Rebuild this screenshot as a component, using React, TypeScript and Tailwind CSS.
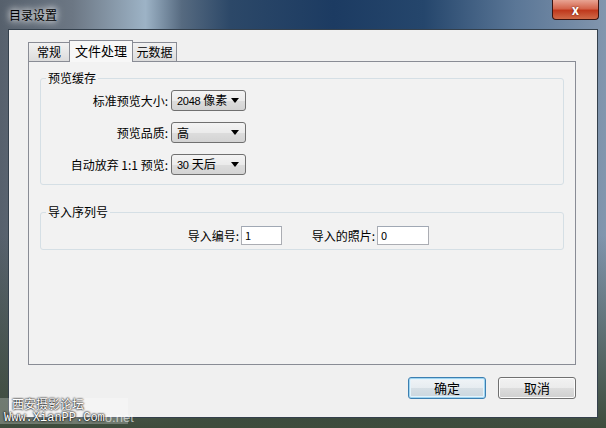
import React from "react";

const font = "font-['Noto_Sans_CJK_SC','Noto_Sans',sans-serif]";

function Arrow() {
  return (
    <svg width="8" height="5" viewBox="0 0 8 5" className="shrink-0">
      <path d="M0 0h8L4 5z" fill="#000" />
    </svg>
  );
}

function Combo({ num, text }: { num?: string; text: string }) {
  return (
    <div className="flex h-[21px] w-[75px] items-center justify-between rounded-[3px] border border-[#707070] bg-[linear-gradient(to_bottom,#f4f4f4_0%,#ebebeb_50%,#dddddd_51%,#d3d3d3_100%)] pl-[5px] pr-[6px] leading-none text-black">
      <span className="flex items-baseline gap-[3px]">
        {num && <span className="font-['Liberation_Sans',sans-serif] text-[11px] tracking-[-0.3px]">{num}</span>}
        <span className="text-[12px]">{text}</span>
      </span>
      <Arrow />
    </div>
  );
}

function Field({ value, width }: { value: string; width: string }) {
  return (
    <div className={`flex h-[19px] items-center border border-[#abadb3] border-t-[#a0a8b4] bg-white pl-[3px] text-[11px] text-black ${width}`}>
      {value}
    </div>
  );
}

const rows = [
  { label: "标准预览大小:", num: "2048", text: "像素" },
  { label: "预览品质:", num: "", text: "高" },
  { label: "自动放弃 1:1 预览:", num: "30", text: "天后" },
];

export default function App() {
  return (
    <div
      className={`relative flex h-[428px] w-[606px] flex-col overflow-hidden ${font} bg-[linear-gradient(to_bottom,transparent_55%,#3e4c3c_100%),linear-gradient(90deg,#56606c_0%,#6c7784_12%,#9db3c6_24%,#566a80_30%,#2c4868_38%,#1c3b62_55%,#25466c_70%,#5a7696_85%,#8296ae_100%)]`}
    >
      {/* title bar */}
      <div className="flex h-[29px] shrink-0 items-center pl-[9px]">
        <span className="text-[12px] text-black [text-shadow:0_0_6px_#fff,0_0_10px_#fff]">目录设置</span>
      </div>
      <div className="absolute right-[7px] top-0 flex h-[20px] w-[47px] items-center justify-center rounded-b-[4px] border border-t-0 border-[#3b1410] bg-[linear-gradient(to_bottom,#e8a493_0%,#d4654c_45%,#c0391d_55%,#d06a48_100%)]">
        <span className="text-[13px] font-bold leading-none text-white [text-shadow:0_0_2px_#5a1208]">x</span>
      </div>

      {/* client area */}
      <div className="mx-[8px] flex h-[389px] flex-col border border-[#34404c] bg-[#f0f0f0] pl-[19px] pt-[10px]">
        {/* tabs */}
        <div className="relative z-10 flex h-[21px] items-end">
          <div className="flex h-[19px] w-[42px] items-center justify-center border border-b-0 border-[#898c95] bg-[linear-gradient(to_bottom,#f2f2f2,#dcdcdc)] text-[12px] text-black">
            常规
          </div>
          <div className="-mx-[1px] mb-[-1px] flex h-[22px] w-[64px] items-center justify-center border border-b-0 border-[#898c95] bg-[#f7f7f7] pb-[1px] text-[13px] text-black">
            文件处理
          </div>
          <div className="flex h-[19px] w-[45px] items-center justify-center border border-b-0 border-[#898c95] bg-[linear-gradient(to_bottom,#f2f2f2,#dcdcdc)] text-[12px] text-black">
            元数据
          </div>
        </div>

        {/* panel */}
        <div className="h-[304px] w-[548px] border border-[#898c95] bg-[#f2f2f2] px-[11px] pt-[9px]">
          <fieldset className="h-[114px] rounded-[3px] border border-[#d5dfe5]">
            <legend className="ml-[5px] px-[2px] text-[12px] leading-[14px] text-black">预览缓存</legend>
            <div className="flex flex-col gap-[11px] pt-[5px]">
              {rows.map((r) => (
                <div key={r.label} className="flex items-center">
                  <div className="w-[128px] pr-[1px] text-right text-[12px] text-black">{r.label}</div>
                  <div className="ml-[2px]">
                    <Combo num={r.num} text={r.text} />
                  </div>
                </div>
              ))}
            </div>
          </fieldset>

          <fieldset className="mt-[20px] h-[45px] rounded-[3px] border border-[#d5dfe5]">
            <legend className="ml-[5px] px-[2px] text-[12px] leading-[14px] text-black">导入序列号</legend>
            <div className="flex items-center pt-[7px]">
              <div className="w-[198px] text-right text-[12px] text-black">导入编号:</div>
              <div className="ml-[2px]">
                <Field value="1" width="w-[41px]" />
              </div>
              <div className="w-[93px] text-right text-[12px] text-black">导入的照片:</div>
              <div className="ml-[2px]">
                <Field value="0" width="w-[52px]" />
              </div>
            </div>
          </fieldset>
        </div>

        {/* buttons */}
        <div className="mt-[12px] flex w-[548px] justify-end gap-[12px]">
          <button className="flex h-[22px] w-[78px] items-center justify-center rounded-[3px] border border-[#3c7fb1] bg-[linear-gradient(to_bottom,#f0f4f7_0%,#e6ecf0_50%,#d6dfe5_51%,#cbd6de_100%)] text-[13px] text-black shadow-[inset_0_0_0_1px_#9fd4f0,inset_0_0_0_2px_#e4f3fb]">
            确定
          </button>
          <button className="flex h-[22px] w-[78px] items-center justify-center rounded-[3px] border border-[#707070] bg-[linear-gradient(to_bottom,#f2f2f2_0%,#ebebeb_50%,#dddddd_51%,#cfcfcf_100%)] text-[13px] text-black shadow-[inset_0_0_0_1px_#fcfcfc]">
            取消
          </button>
        </div>
      </div>

      {/* watermark */}
      <div className="absolute bottom-[4px] left-0 h-[26px] w-[128px] bg-white/25" />
      <div className="absolute bottom-[18px] left-[12px] text-[12px] leading-[12px] text-white [text-shadow:0_0_2px_#000,0_0_2px_#000]">
        西安摄影论坛
      </div>
      <div className="absolute bottom-[4px] left-[4px] flex items-end font-['Liberation_Mono',monospace] text-[12px] leading-[12px]">
        <span className="text-white [text-shadow:0_0_2px_#000,0_0_2px_#000]">Www.XianPP.Com</span>
        <span className="font-['Liberation_Sans',sans-serif] text-[13px] leading-[12px] text-white/60">o.net</span>
      </div>
    </div>
  );
}
